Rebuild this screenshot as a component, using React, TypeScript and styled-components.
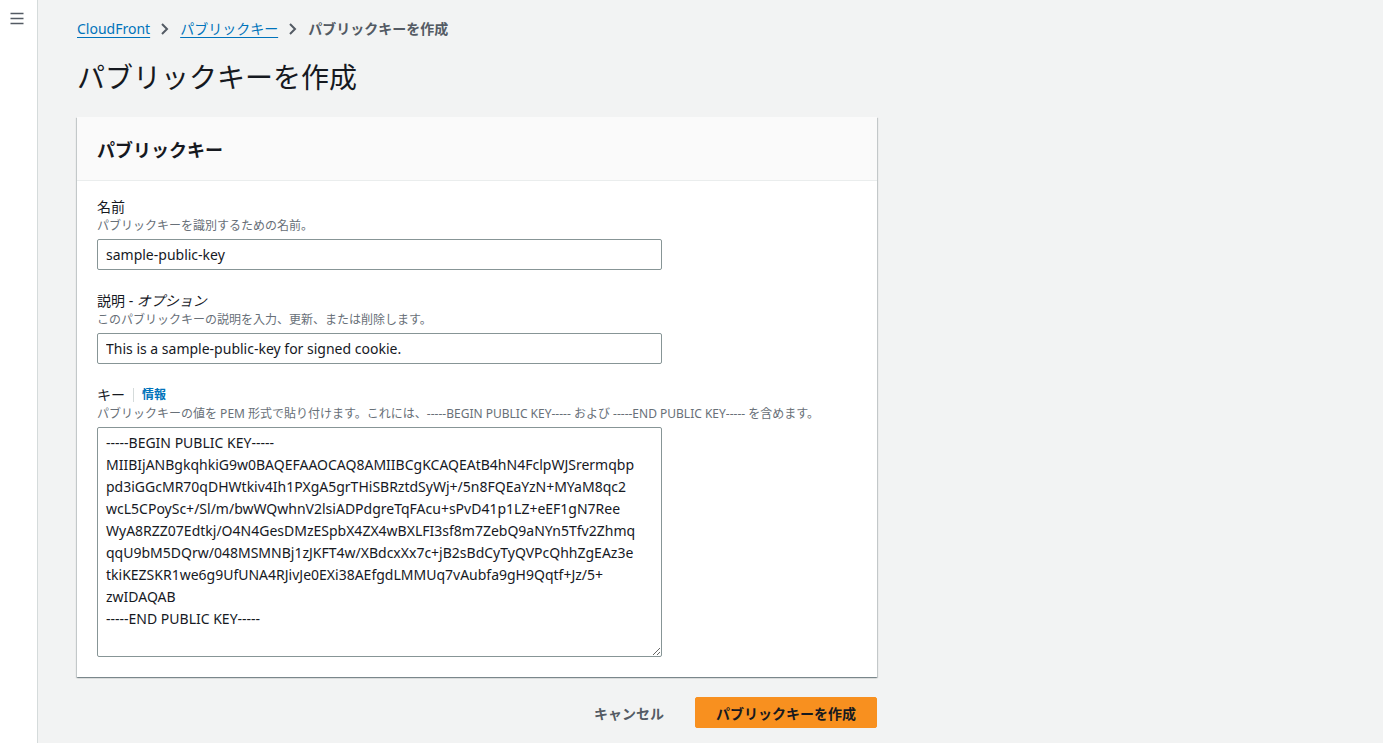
import React from "react";
import styled, { createGlobalStyle } from "styled-components";

const GlobalStyle = createGlobalStyle`
  html, body {
    margin: 0;
    padding: 0;
    background: #f2f3f3;
    font-family: "Noto Sans", "Noto Sans CJK JP", sans-serif;
    color: #16191f;
  }
  * { box-sizing: border-box; }
`;

const Shell = styled.div`
  display: flex;
  min-height: 743px;
`;

const SideNav = styled.aside`
  width: 38px;
  flex-shrink: 0;
  background: #ffffff;
  border-right: 1px solid #d5dbdb;
  display: flex;
  justify-content: center;
  padding-top: 10px;
`;

const MenuButton = styled.button`
  background: none;
  border: none;
  padding: 0;
  width: 16px;
  height: 16px;
  margin-right: 3px;
  color: #545b64;
  cursor: pointer;
`;

const Main = styled.main`
  flex: 1;
  padding: 18px 0 0 39px;
`;

const Content = styled.div`
  width: 800px;
`;

const Crumbs = styled.nav`
  display: flex;
  align-items: center;
  gap: 8px;
  font-size: 14px;
  line-height: 22px;
`;

const CrumbLink = styled.a`
  color: #0073bb;
  text-decoration: underline;
  text-underline-offset: 3px;
  cursor: pointer;
`;

const CrumbCurrent = styled.span`
  color: #545b64;
  font-weight: 700;
`;

const Chevron = styled.svg`
  width: 14px;
  height: 16px;
  color: #545b64;
`;

const Title = styled.h1`
  margin: 19px 0 22px;
  font-size: 28px;
  line-height: 36px;
  font-weight: 400;
  color: #16191f;
`;

const Card = styled.section`
  background: #ffffff;
  box-shadow: 0 1px 1px 0 rgba(0, 28, 36, 0.3), 1px 1px 1px 0 rgba(0, 28, 36, 0.15),
    -1px 1px 1px 0 rgba(0, 28, 36, 0.15);
`;

const CardHeader = styled.header`
  height: 64px;
  display: flex;
  align-items: center;
  padding: 0 20px;
  background: #fafafa;
  border-bottom: 1px solid #eaeded;
`;

const CardTitle = styled.h2`
  margin: 0;
  font-size: 18px;
  font-weight: 700;
  color: #16191f;
`;

const CardBody = styled.div`
  padding: 15px 20px 20px;
  display: flex;
  flex-direction: column;
  gap: 20px;
`;

const Field = styled.div`
  display: flex;
  flex-direction: column;
`;

const LabelRow = styled.div`
  display: flex;
  align-items: center;
  height: 22px;
  font-size: 14px;
  line-height: 22px;
  color: #16191f;
`;

const Optional = styled.i`
  font-style: italic;
`;

const InfoLink = styled.a`
  margin-left: 8px;
  padding-left: 8px;
  border-left: 1px solid #d5dbdb;
  line-height: 14px;
  color: #0073bb;
  font-size: 12px;
  font-weight: 700;
  cursor: pointer;
`;

const Hint = styled.div`
  font-size: 12px;
  line-height: 16px;
  color: #687078;
  margin-bottom: 5px;
`;

const TextInput = styled.input`
  width: 565px;
  height: 31px;
  padding: 4px 8px;
  border: 1px solid #879596;
  border-radius: 2px;
  font-family: inherit;
  font-size: 14px;
  color: #16191f;
  outline: none;
`;

const KeyArea = styled.textarea`
  width: 565px;
  height: 230px;
  padding: 4px 8px;
  border: 1px solid #879596;
  border-radius: 2px;
  font-family: inherit;
  font-size: 14px;
  line-height: 22px;
  color: #16191f;
  outline: none;
  resize: both;
`;

const Actions = styled.div`
  display: flex;
  justify-content: flex-end;
  align-items: center;
  gap: 10px;
  margin-top: 20px;
`;

const Button = styled.button<{ $primary?: boolean }>`
  height: 31px;
  padding: 0 20px;
  border-radius: 2px;
  font-family: inherit;
  font-size: 14px;
  font-weight: 700;
  cursor: pointer;
  border: 1px solid ${(p) => (p.$primary ? "#f8901f" : "transparent")};
  background: ${(p) => (p.$primary ? "#f8901f" : "transparent")};
  color: ${(p) => (p.$primary ? "#16191f" : "#545b64")};
`;

const keyText = `-----BEGIN PUBLIC KEY-----
MIIBIjANBgkqhkiG9w0BAQEFAAOCAQ8AMIIBCgKCAQEAtB4hN4FclpWJSrermqbp
pd3iGGcMR70qDHWtkiv4Ih1PXgA5grTHiSBRztdSyWj+/5n8FQEaYzN+MYaM8qc2
wcL5CPoySc+/Sl/m/bwWQwhnV2lsiADPdgreTqFAcu+sPvD41p1LZ+eEF1gN7Ree
WyA8RZZ07Edtkj/O4N4GesDMzESpbX4ZX4wBXLFI3sf8m7ZebQ9aNYn5Tfv2Zhmq
qqU9bM5DQrw/048MSMNBj1zJKFT4w/XBdcxXx7c+jB2sBdCyTyQVPcQhhZgEAz3e
tkiKEZSKR1we6g9UfUNA4RJivJe0EXi38AEfgdLMMUq7vAubfa9gH9Qqtf+Jz/5+
zwIDAQAB
-----END PUBLIC KEY-----`;

const ChevronIcon = () => (
  <Chevron viewBox="0 0 14 16" fill="none">
    <path d="M4 3l5 5-5 5" stroke="currentColor" strokeWidth="2" />
  </Chevron>
);

export default function App() {
  return (
    <>
      <GlobalStyle />
      <Shell>
        <SideNav>
          <MenuButton aria-label="メニュー">
            <svg viewBox="0 0 16 16" width="16" height="16">
              <path d="M1.5 3.5h13M1.5 8.5h13M1.5 13.5h13" stroke="currentColor" strokeWidth="1.6" />
            </svg>
          </MenuButton>
        </SideNav>
        <Main>
          <Content>
            <Crumbs>
              <CrumbLink>CloudFront</CrumbLink>
              <ChevronIcon />
              <CrumbLink>パブリックキー</CrumbLink>
              <ChevronIcon />
              <CrumbCurrent>パブリックキーを作成</CrumbCurrent>
            </Crumbs>
            <Title>パブリックキーを作成</Title>
            <Card>
              <CardHeader>
                <CardTitle>パブリックキー</CardTitle>
              </CardHeader>
              <CardBody>
                <Field>
                  <LabelRow>名前</LabelRow>
                  <Hint>パブリックキーを識別するための名前。</Hint>
                  <TextInput defaultValue="sample-public-key" />
                </Field>
                <Field>
                  <LabelRow>
                    説明 -&nbsp;<Optional>オプション</Optional>
                  </LabelRow>
                  <Hint>このパブリックキーの説明を入力、更新、または削除します。</Hint>
                  <TextInput defaultValue="This is a sample-public-key for signed cookie." />
                </Field>
                <Field>
                  <LabelRow>
                    キー<InfoLink>情報</InfoLink>
                  </LabelRow>
                  <Hint>
                    パブリックキーの値を PEM 形式で貼り付けます。これには、-----BEGIN PUBLIC KEY----- および -----END PUBLIC KEY----- を含めます。
                  </Hint>
                  <KeyArea defaultValue={keyText} spellCheck={false} />
                </Field>
              </CardBody>
            </Card>
            <Actions>
              <Button>キャンセル</Button>
              <Button $primary>パブリックキーを作成</Button>
            </Actions>
          </Content>
        </Main>
      </Shell>
    </>
  );
}
